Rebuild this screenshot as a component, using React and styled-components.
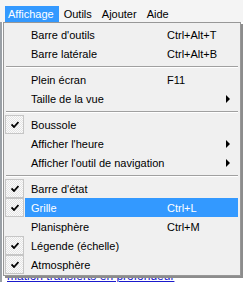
import styled, { createGlobalStyle } from "styled-components";

const Global = createGlobalStyle`
  html, body { margin: 0; padding: 0; background: #fff; }
  body { font-family: "Liberation Sans", Arial, sans-serif; font-size: 11px; overflow: hidden; }
`;

const Page = styled.div`
  position: relative;
  width: 243px;
  height: 282px;
  overflow: hidden;
  background: #fff;
`;

const MenuBar = styled.div`
  display: flex;
  align-items: flex-end;
  height: 22px;
  padding-left: 5px;
  box-sizing: border-box;
  background: #f4f4f4;
`;

const BarItem = styled.div`
  height: 16px;
  line-height: 16px;
  padding: 0 5px 0 3px;
  margin-right: ${(p) => p.$gap || 0}px;
  color: ${(p) => (p.$open ? "#fff" : "#000")};
  background: ${(p) => (p.$open ? "#3399ff" : "transparent")};
`;

const Behind = styled.div`
  display: flex;
  flex-direction: column;
  justify-content: flex-end;
  height: 260px;
  padding: 0 0 0 5px;
  box-sizing: border-box;
  border-left: 2px solid #9aa0a6;
`;

const Link = styled.a`
  font-size: 12px;
  line-height: 12px;
  color: #1a1acc;
  text-decoration: underline;
  white-space: nowrap;
`;

const Popup = styled.div`
  position: absolute;
  top: 22px;
  left: 3px;
  width: 238px;
  box-sizing: border-box;
  padding: 2px 2px 1px 1px;
  background: #f0f0f0;
  border: 1px solid #979797;
  box-shadow: 2px 2px 0 #8c8c8c;
`;

const Row = styled.div`
  display: flex;
  height: 19px;
`;

const Gutter = styled.div`
  width: 20px;
  flex: none;
`;

const CheckBox = styled.div`
  display: flex;
  align-items: center;
  justify-content: center;
  width: 19px;
  height: 19px;
  box-sizing: border-box;
  border: 1px solid #c6c6c6;
  background: repeating-conic-gradient(#fbfbfb 0 25%, #e4e4e4 0 50%) 0 0 / 2px 2px;
`;

const Body = styled.div`
  flex: 1;
  display: grid;
  grid-template-columns: 136px 1fr 12px;
  align-items: center;
  padding-left: 6px;
  color: ${(p) => (p.$active ? "#fff" : "#000")};
  background: ${(p) => (p.$active ? "#3399ff" : "transparent")};
  white-space: nowrap;
`;

const Arrow = styled.span`
  width: 0;
  height: 0;
  border-top: 4px solid transparent;
  border-bottom: 4px solid transparent;
  border-left: 4px solid #000;
`;

const Separator = styled.div`
  height: 7px;
  padding-top: 3px;
  box-sizing: border-box;
  margin-left: 1px;

  &::before {
    content: "";
    display: block;
    border-top: 1px solid #a0a0a0;
    border-bottom: 1px solid #fff;
  }
`;

function Tick() {
  return (
    <svg width="8" height="7" viewBox="0 0 8 7">
      <path d="M0.5 3.5 L3 6 L7.5 1" fill="none" stroke="#000" strokeWidth="1.8" />
    </svg>
  );
}

const groups = [
  [
    { label: "Barre d'outils", key: "Ctrl+Alt+T" },
    { label: "Barre latérale", key: "Ctrl+Alt+B" },
  ],
  [
    { label: "Plein écran", key: "F11" },
    { label: "Taille de la vue", sub: true },
  ],
  [
    { label: "Boussole", checked: true },
    { label: "Afficher l'heure", sub: true },
    { label: "Afficher l'outil de navigation", sub: true },
  ],
  [
    { label: "Barre d'état", checked: true },
    { label: "Grille", key: "Ctrl+L", checked: true, active: true },
    { label: "Planisphère", key: "Ctrl+M" },
    { label: "Légende (échelle)", checked: true },
    { label: "Atmosphère", checked: true },
  ],
];

function Item({ label, shortcut, checked, sub, active }) {
  return (
    <Row>
      <Gutter>
        {checked && (
          <CheckBox>
            <Tick />
          </CheckBox>
        )}
      </Gutter>
      <Body $active={active}>
        <span>{label}</span>
        <span>{shortcut}</span>
        {sub ? <Arrow /> : <span />}
      </Body>
    </Row>
  );
}

export default function App() {
  return (
    <Page>
      <Global />
      <MenuBar>
        <BarItem $open $gap={2}>Affichage</BarItem>
        <BarItem $gap={2}>Outils</BarItem>
        <BarItem $gap={2}>Ajouter</BarItem>
        <BarItem>Aide</BarItem>
      </MenuBar>
      <Behind>
        <Link>mation transferts en profondeur</Link>
      </Behind>
      <Popup>
        {groups.map((items, gi) => (
          <div key={gi}>
            {gi > 0 && <Separator />}
            {items.map((it) => (
              <Item
                key={it.label}
                label={it.label}
                shortcut={it.key}
                checked={it.checked}
                sub={it.sub}
                active={it.active}
              />
            ))}
          </div>
        ))}
      </Popup>
    </Page>
  );
}
